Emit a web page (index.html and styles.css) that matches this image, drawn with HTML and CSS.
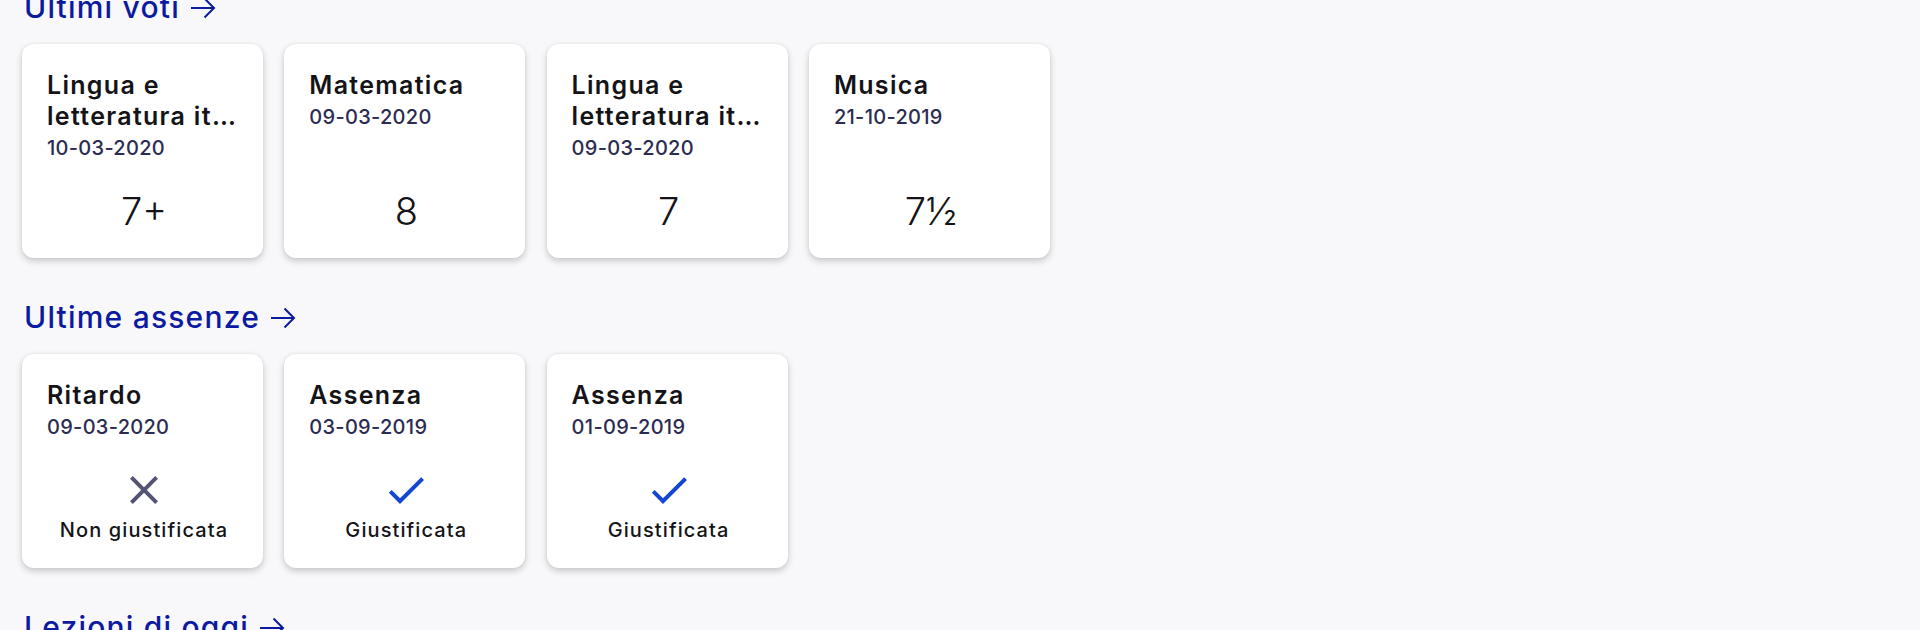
FILE: index.html
```html
<!DOCTYPE html>
<html lang="it">
<head>
<meta charset="utf-8">
<title>Registro</title>
<link rel="stylesheet" href="styles.css">
</head>
<body>
<main class="page">
  <section class="section">
    <h2 class="heading">Ultimi voti <svg class="arrow" viewBox="0 0 26 22" aria-hidden="true"><path d="M1 11H24M14.5 1.5L24 11L14.5 20.5"/></svg></h2>
    <div class="row">
      <div class="card">
        <div class="title"><span class="line">Lingua e</span><span class="line">letteratura italiana</span></div>
        <div class="date">10-03-2020</div>
        <div class="grade">7+</div>
      </div>
      <div class="card">
        <div class="title"><span class="line">Matematica</span></div>
        <div class="date">09-03-2020</div>
        <div class="grade">8</div>
      </div>
      <div class="card">
        <div class="title"><span class="line">Lingua e</span><span class="line">letteratura italiana</span></div>
        <div class="date">09-03-2020</div>
        <div class="grade">7</div>
      </div>
      <div class="card">
        <div class="title"><span class="line">Musica</span></div>
        <div class="date">21-10-2019</div>
        <div class="grade">7½</div>
      </div>
    </div>
  </section>
  <section class="section">
    <h2 class="heading">Ultime assenze <svg class="arrow" viewBox="0 0 26 22" aria-hidden="true"><path d="M1 11H24M14.5 1.5L24 11L14.5 20.5"/></svg></h2>
    <div class="row">
      <div class="card">
        <div class="title"><span class="line">Ritardo</span></div>
        <div class="date">09-03-2020</div>
        <div class="status">
          <svg class="icon icon-x" viewBox="0 0 24 24" aria-hidden="true"><path d="M19 6.41L17.59 5 12 10.59 6.41 5 5 6.41 10.59 12 5 17.59 6.41 19 12 13.41 17.59 19 19 17.59 13.41 12z"/></svg>
          <div class="label">Non giustificata</div>
        </div>
      </div>
      <div class="card">
        <div class="title"><span class="line">Assenza</span></div>
        <div class="date">03-09-2019</div>
        <div class="status">
          <svg class="icon icon-check" viewBox="0 0 24 24" aria-hidden="true"><path d="M9 16.17L4.83 12l-1.42 1.41L9 19 21 7l-1.41-1.41z"/></svg>
          <div class="label">Giustificata</div>
        </div>
      </div>
      <div class="card">
        <div class="title"><span class="line">Assenza</span></div>
        <div class="date">01-09-2019</div>
        <div class="status">
          <svg class="icon icon-check" viewBox="0 0 24 24" aria-hidden="true"><path d="M9 16.17L4.83 12l-1.42 1.41L9 19 21 7l-1.41-1.41z"/></svg>
          <div class="label">Giustificata</div>
        </div>
      </div>
    </div>
  </section>
  <section class="section">
    <h2 class="heading">Lezioni di oggi <svg class="arrow" viewBox="0 0 26 22" aria-hidden="true"><path d="M1 11H24M14.5 1.5L24 11L14.5 20.5"/></svg></h2>
  </section>
</main>
</body>
</html>
```

FILE: styles.css
```css
html, body {
  margin: 0;
  padding: 0;
  background: #f8f8fa;
  overflow: hidden;
}

body {
  font-family: Inter, "Noto Sans", sans-serif;
  color: #141418;
}

.page {
  margin-top: -11px;
  padding-left: 12px;
}

.heading {
  margin: 31px 0 9px;
  padding-left: 12px;
  font-size: 30px;
  line-height: 36px;
  font-weight: 500;
  letter-spacing: 1.2px;
  color: #0c1aa0;
  display: flex;
  align-items: center;
  gap: 10px;
}

.section:first-child .heading {
  margin-top: 0;
}

.arrow {
  width: 26px;
  height: 22px;
  fill: none;
  stroke: #0c1aa0;
  stroke-width: 2;
  margin-top: 2px;
}

.row {
  display: flex;
  gap: 21.3px;
  overflow: hidden;
  padding: 10px;
}

.card {
  flex: 0 0 241px;
  height: 214px;
  box-sizing: border-box;
  background: #ffffff;
  border-radius: 12px;
  box-shadow: 0 3px 7px rgba(0, 0, 0, 0.2), 0 0 3px rgba(0, 0, 0, 0.05);
  padding: 26px 22px 24px 25px;
  display: flex;
  flex-direction: column;
  min-width: 0;
}

.title {
  font-size: 25px;
  line-height: 31px;
  font-weight: 600;
  letter-spacing: 1.3px;
  color: #141418;
}

.line {
  display: block;
  white-space: nowrap;
  overflow: hidden;
  text-overflow: ellipsis;
}

.date {
  margin-top: 3px;
  font-size: 20px;
  line-height: 26px;
  font-weight: 500;
  letter-spacing: 0.3px;
  color: #2c2c52;
}

.grade {
  margin-top: auto;
  text-align: center;
  font-size: 38px;
  line-height: 46px;
  font-weight: 300;
  color: #141418;
}

.status {
  margin-top: auto;
  margin-bottom: 2px;
  display: flex;
  flex-direction: column;
  align-items: center;
}

.icon {
  width: 48px;
  height: 48px;
}

.icon-x {
  fill: #535377;
}

.icon-check {
  fill: #1446d4;
}

.label {
  margin-top: 4px;
  font-size: 20px;
  line-height: 24px;
  font-weight: 500;
  letter-spacing: 1.1px;
  color: #141418;
}
```
